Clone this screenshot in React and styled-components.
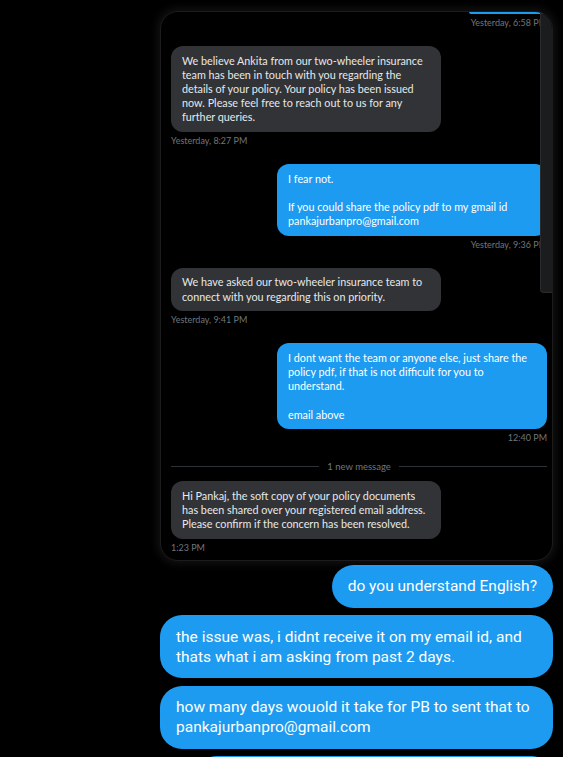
import React from 'react'
import styled, { createGlobalStyle } from 'styled-components'

const GlobalStyle = createGlobalStyle`
	html, body {
		margin: 0;
		padding: 0;
		background: #000;
		overflow: hidden;
	}
	* {
		box-sizing: border-box;
	}
`

const Conversation = styled.div`
	display: flex;
	flex-direction: column;
	align-items: flex-end;
	width: 563px;
	height: 757px;
	padding: 11px 10px 0 160px;
	background: #000;
	overflow: hidden;
	& > * {
		flex-shrink: 0;
	}
`

const Card = styled.div`
	position: relative;
	width: 393px;
	margin-bottom: 4px;
	padding: 0 5px 7px 10px;
	background: #000;
	border: 1px solid #1c1c1c;
	border-radius: 18px;
	box-shadow: 0 0 8px 3px rgba(255, 255, 255, 0.07);
	overflow: hidden;
	font-family: 'Lato', 'Liberation Sans', sans-serif;
`

const Scrollbar = styled.div`
	position: absolute;
	top: 0;
	right: 0;
	width: 12px;
	height: 281px;
	background: #1b1c1e;
	border-left: 1px solid #2a2b2d;
	border-bottom: 1px solid #2a2b2d;
	border-bottom-left-radius: 4px;
`

const PrevTail = styled.div`
	width: 78px;
	height: 2px;
	background: #1d9bf0;
	border-radius: 0 0 3px 3px;
`

const Group = styled.div`
	display: flex;
	flex-direction: column;
	align-items: ${({ $mine }) => ($mine ? 'flex-end' : 'flex-start')};
	margin-bottom: ${({ $last }) => ($last ? '0' : '18px')};
`

const InnerBubble = styled.div`
	width: 270px;
	padding: 7.5px 11px;
	background: ${({ $mine }) => ($mine ? '#1d9bf0' : '#313336')};
	color: ${({ $mine }) => ($mine ? '#ffffff' : '#e7e9ea')};
	border-radius: 12px;
	font-size: 10.8px;
	line-height: 14.2px;
	white-space: pre;
`

const Stamp = styled.div`
	margin-top: 4px;
	color: #6e767d;
	font-size: 9px;
	line-height: 10px;
	white-space: nowrap;
`

const Divider = styled.div`
	display: flex;
	align-items: center;
	gap: 8px;
	height: 10px;
	margin: 4px 0 10px;
	color: #6e767d;
	font-size: 9.5px;
	&::before,
	&::after {
		content: '';
		flex: 1;
		height: 1px;
		background: #2f3336;
	}
`

const Bubble = styled.div`
	width: ${({ $full }) => ($full ? '393px' : 'auto')};
	margin-bottom: 7.5px;
	padding: 11.5px 16px;
	background: #1d9bf0;
	color: #fff;
	border-radius: 22px;
	font-family: 'Roboto', 'Liberation Sans', sans-serif;
	font-size: 15.5px;
	line-height: 20px;
	white-space: pre-line;
`

const CutBubble = styled(Bubble)`
	width: 358px;
	height: 44px;
`

const messages = [
	{
		mine: false,
		text: 'We believe Ankita from our two-wheeler insurance\nteam has been in touch with you regarding the\ndetails of your policy. Your policy has been issued\nnow. Please feel free to reach out to us for any\nfurther queries.',
		time: 'Yesterday, 8:27 PM',
	},
	{
		mine: true,
		text: 'I fear not.\n\nIf you could share the policy pdf to my gmail id\npankajurbanpro@gmail.com',
		time: 'Yesterday, 9:36 PM',
	},
	{
		mine: false,
		text: 'We have asked our two-wheeler insurance team to\nconnect with you regarding this on priority.',
		time: 'Yesterday, 9:41 PM',
	},
	{
		mine: true,
		text: 'I dont want the team or anyone else, just share the\npolicy pdf, if that is not difficult for you to\nunderstand.\n\nemail above',
		time: '12:40 PM',
	},
]

const replies = [
	{ text: 'do you understand English?' },
	{ text: 'the issue was, i didnt receive it on my email id, and\nthats what i am asking from past 2 days.', full: true },
	{ text: 'how many days wouold it take for PB to sent that to\npankajurbanpro@gmail.com', full: true },
]

const App = () => (
	<>
		<GlobalStyle />
		<Conversation>
			<Card>
				<Group $mine>
					<PrevTail />
					<Stamp>Yesterday, 6:58 PM</Stamp>
				</Group>
				{messages.map((m) => (
					<Group key={m.time} $mine={m.mine}>
						<InnerBubble $mine={m.mine}>{m.text}</InnerBubble>
						<Stamp>{m.time}</Stamp>
					</Group>
				))}
				<Divider>1 new message</Divider>
				<Group $last>
					<InnerBubble>
						{'Hi Pankaj, the soft copy of your policy documents\nhas been shared over your registered email address.\nPlease confirm if the concern has been resolved.'}
					</InnerBubble>
					<Stamp>1:23 PM</Stamp>
				</Group>
				<Scrollbar />
			</Card>
			{replies.map((r) => (
				<Bubble key={r.text} $full={r.full}>
					{r.text}
				</Bubble>
			))}
			<CutBubble>&nbsp;</CutBubble>
		</Conversation>
	</>
)

export default App
